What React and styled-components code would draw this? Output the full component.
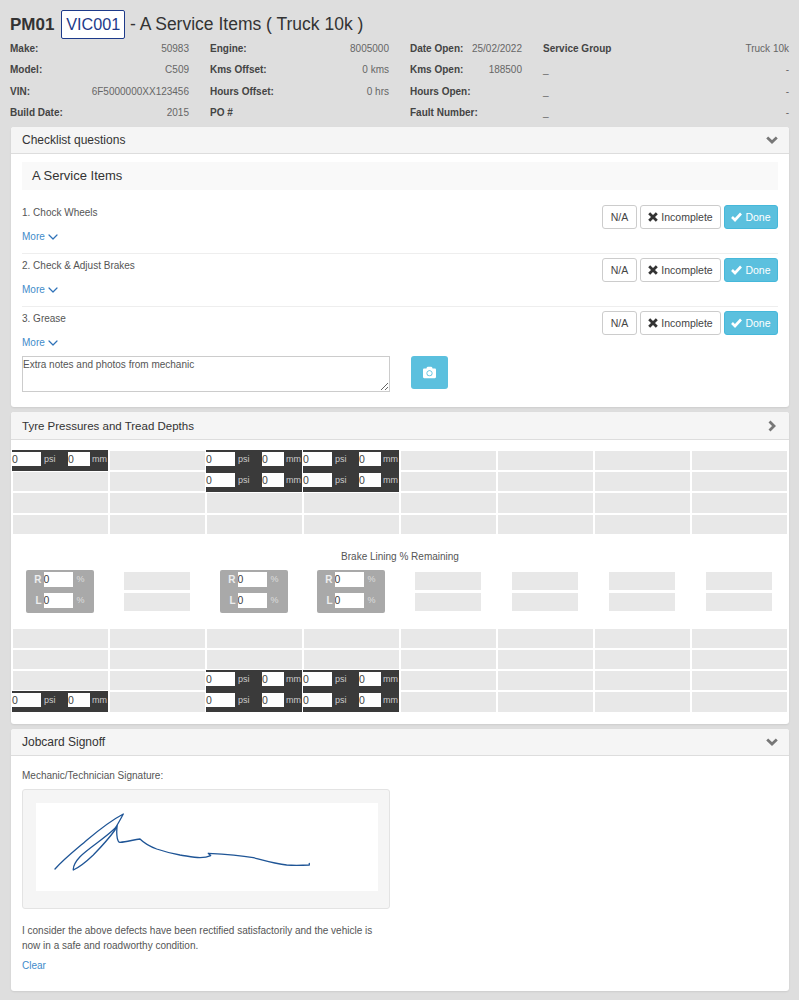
import React from 'react';
import styled, { createGlobalStyle } from 'styled-components';
import { FaCamera } from 'react-icons/fa';
import { ChevronDown } from 'lucide-react';

const GlobalStyle = createGlobalStyle`
    html, body {
        margin: 0;
        padding: 0;
        background: #dedede;
        font-family: "Liberation Sans", Arial, sans-serif;
        font-size: 10px;
        color: #555;
    }
    * { box-sizing: border-box; }
`;

const Page = styled.div`
    width: 799px;
    height: 1000px;
    overflow: hidden;
    padding: 11px 10px 0 10px;
`;

const Title = styled.h3`
    display: flex;
    align-items: center;
    height: 27px;
    margin: 0;
    font-size: 17.5px;
    font-weight: 400;
    color: #333;
    white-space: pre;
    b { font-size: 17px; }
`;

const JobNumber = styled.span`
    display: inline-flex;
    align-items: center;
    justify-content: center;
    flex: none;
    width: 63.5px;
    height: 29px;
    margin: 0 5px 0 7px;
    background: #fff;
    border: 1.5px solid #1d3a8a;
    border-radius: 2px;
    font-size: 16.2px;
    color: #1d3a8a;
`;

const InfoGrid = styled.div`
    display: grid;
    grid-template-columns: 179px 179px 112px 246px;
    column-gap: 21px;
    grid-auto-rows: 21.3px;
    height: 89px;
`;

const InfoPair = styled.div`
    display: flex;
    justify-content: space-between;
    align-items: center;
    color: #666;
    white-space: nowrap;
`;

const InfoLabel = styled.b`
    color: #444;
`;

const Panel = styled.section`
    width: 778px;
    margin: 0 0 5px 1px;
    background: #fff;
    border-radius: 3px;
    box-shadow: 0 1px 2px rgba(0, 0, 0, 0.08);
    overflow: hidden;
`;

const PanelHeading = styled.div`
    display: flex;
    justify-content: space-between;
    align-items: center;
    height: ${props => props.$height || 27}px;
    padding: 0 11px;
    background: #f5f5f5;
    border-bottom: 1px solid #ddd;
    font-size: ${props => props.$size || 12}px;
    color: #333;
`;

const ChecklistBody = styled.div`
    padding: 8px 11px 15px;
`;

const SectionTitle = styled.div`
    display: flex;
    align-items: center;
    height: 28px;
    margin-bottom: 11px;
    padding: 0 0 1px 10px;
    background: #f9f9f9;
    font-size: 13px;
    color: #333;
`;

const Item = styled.div`
    display: flex;
    justify-content: space-between;
    height: ${props => props.$last ? 49 : 53}px;
    padding-top: 4px;
    border-bottom: ${props => props.$last ? '0' : '1px solid #eee'};
`;

const ItemText = styled.div`
    padding-top: 1px;
    line-height: 13px;
`;

const MoreLink = styled.a`
    display: flex;
    align-items: center;
    height: 13px;
    margin-top: 11px;
    color: #428bca;
    svg {
        flex: none;
        width: 16px;
        height: 16px;
        color: #2f72b8;
    }
`;

const ButtonGroup = styled.div`
    display: flex;
    gap: 3px;
`;

const ActionButton = styled.button`
    display: flex;
    align-items: center;
    justify-content: center;
    gap: 3px;
    width: ${props => props.$width}px;
    height: 24px;
    padding: 0;
    background: ${props => props.$active ? '#5bc0de' : '#fff'};
    border: 1px solid ${props => props.$active ? '#46b8da' : '#ccc'};
    border-radius: 3px;
    font-family: inherit;
    font-size: 10.5px;
    color: ${props => props.$active ? '#fff' : '#444'};
`;

const NotesRow = styled.div`
    display: flex;
    align-items: flex-start;
    gap: 21px;
`;

const Notes = styled.textarea`
    display: block;
    width: 368px;
    height: 36px;
    padding: 1px 0;
    border: 1px solid #ccc;
    border-radius: 0;
    font-family: inherit;
    font-size: 10px;
    line-height: 13px;
    color: #555;
    &::placeholder {
        color: #555;
        opacity: 1;
    }
`;

const CameraButton = styled.button`
    display: flex;
    align-items: center;
    justify-content: center;
    width: 37px;
    height: 33px;
    padding: 0;
    background: #5bc0de;
    border: 0;
    border-radius: 3px;
    color: #fff;
    svg {
        width: 13px;
        height: 13px;
    }
`;

const TyreBody = styled.div`
    padding: 10px 1px 11.4px;
`;

const TyreGrid = styled.div`
    display: grid;
    grid-template-columns: repeat(8, 97px);
    grid-auto-rows: 21.2px;
`;

const BlankCell = styled.div`
    margin: 1px;
    background: #e8e8e8;
`;

const TyreCell = styled.div`
    display: flex;
    align-items: flex-start;
    height: 20.5px;
    margin-right: 1px;
    padding-top: 1.5px;
    background: #3a3a3a;
    color: #ccc;
    font-size: 9px;
`;

const TyreInput = styled.input`
    width: ${props => props.$width}px;
    height: 14.5px;
    flex: none;
    padding: 0;
    border: 0;
    border-radius: 0;
    background: #fff;
    font-family: inherit;
    font-size: 10.5px;
    color: #444;
`;

const Unit = styled.span`
    flex: none;
    width: ${props => props.$width}px;
    padding-left: ${props => props.$pad}px;
    line-height: 15px;
`;

const BrakeTitle = styled.div`
    margin: 15px 0 7px;
    line-height: 13px;
    text-align: center;
    color: #555;
`;

const BrakeGrid = styled.div`
    display: grid;
    grid-template-columns: repeat(8, 97px);
    height: 58px;
    margin-left: -1px;
`;

const BrakeCell = styled.div`
    justify-self: center;
    display: flex;
    flex-direction: column;
    gap: 6px;
    width: 68px;
    height: 43px;
    padding-top: 2px;
    background: #a9a9a9;
    border-radius: 2px;
`;

const BrakeRow = styled.div`
    display: flex;
    align-items: center;
    height: 15px;
    color: #ddd;
    font-size: 9px;
`;

const BrakeSide = styled.b`
    width: 18px;
    padding-right: 2px;
    text-align: right;
    font-size: 10px;
    color: #eee;
`;

const BrakeInput = styled.input`
    width: 29px;
    height: 15px;
    padding: 0;
    border: 0;
    border-radius: 0;
    background: #fff;
    font-family: inherit;
    font-size: 10.5px;
    color: #444;
`;

const BrakePercent = styled.span`
    padding-left: 4px;
`;

const BrakeBlank = styled.div`
    justify-self: center;
    display: grid;
    grid-auto-rows: 18px;
    row-gap: 3px;
    width: 66px;
    padding-top: 2px;
    div { background: #e8e8e8; }
`;

const SignoffBody = styled.div`
    padding: 13px 11px 0;
    height: 235px;
`;

const SignLabel = styled.div`
    line-height: 13px;
    margin-bottom: 7px;
`;

const SignWell = styled.div`
    width: 368px;
    height: 120px;
    padding: 13px;
    background: #f5f5f5;
    border: 1px solid #e3e3e3;
    border-radius: 3px;
`;

const SignPad = styled.div`
    width: 342px;
    height: 88px;
    background: #fff;
    svg { display: block; }
`;

const Declaration = styled.p`
    width: 368px;
    margin: 14px 0 7px;
    line-height: 15px;
`;

const ClearLink = styled.a`
    color: #428bca;
`;

const items = ['1. Chock Wheels', '2. Check & Adjust Brakes', '3. Grease'];

const info = [
    ['Make:', '50983'], ['Engine:', '8005000'], ['Date Open:', '25/02/2022'], ['Service Group', 'Truck 10k'],
    ['Model:', 'C509'], ['Kms Offset:', '0 kms'], ['Kms Open:', '188500'], ['_', '-'],
    ['VIN:', '6F5000000XX123456'], ['Hours Offset:', '0 hrs'], ['Hours Open:', ''], ['_', '-'],
    ['Build Date:', '2015'], ['PO #', ''], ['Fault Number:', ''], ['_', '-'],
];

// which columns hold a tyre in each row
const topRows = [[0, 2, 3], [2, 3], [], []];
const bottomRows = [[], [], [2, 3], [0, 2, 3]];
const brakeColumns = [0, 2, 3];
const columns = [0, 1, 2, 3, 4, 5, 6, 7];

const HeavyChevron = ({ right }) => (
    <svg width="12" height="12" viewBox="0 0 12 12" fill="none" stroke="#777" strokeWidth="2.8">
        <path d={right ? 'M3.5 1.5L8 6L3.5 10.5' : 'M1.2 3.5L6 8L10.8 3.5'} />
    </svg>
);

const CrossIcon = () => (
    <svg width="10" height="10" viewBox="0 0 10 10" fill="none" stroke="#333" strokeWidth="2.8">
        <path d="M1.2 1.2L8.8 8.8M8.8 1.2L1.2 8.8" />
    </svg>
);

const CheckIcon = () => (
    <svg width="11" height="10" viewBox="0 0 11 10" fill="none" stroke="#fff" strokeWidth="2.6">
        <path d="M1 5L4 8L10 1.5" />
    </svg>
);

const Tyre = () => (
    <TyreCell>
        <TyreInput $width={29} defaultValue="0" />
        <Unit $width={27} $pad={3}>psi</Unit>
        <TyreInput $width={22} defaultValue="0" />
        <Unit $width={18} $pad={2}>mm</Unit>
    </TyreCell>
);

const TyreRows = ({ rows }) => (
    <TyreGrid>
        {rows.map((row, r) => columns.map(c => (
            row.includes(c) ? <Tyre key={`${r}-${c}`} /> : <BlankCell key={`${r}-${c}`} />
        )))}
    </TyreGrid>
);

const Signature = () => (
    <svg width="342" height="88" viewBox="0 0 342 88" fill="none" stroke="#1f5596" strokeWidth="1.3" strokeLinejoin="round" strokeLinecap="round">
        <path d="M19 66C30 54 42 45 51 37C64 26 76 17 87.3 11C84 17 82 21 79 25.3C68 36 54 44 44 53.7C40 58 37 63 37.3 67C44 64 51 58 57.3 52C66 43 74 34 79 27L81.3 22C80.5 27 80.5 31 81.3 35.3C82 38 83 39.5 84 39.3C91 39 98 36.5 104 36C109 41 114 43.5 120.7 46C128 48.5 136 50.5 144 52C151 53 158 54.5 164 54.7C168 54.7 172 54 174.7 52.7L172.3 50.3C186 51 202 52 217.3 54.7C228 57.5 240 61 250.7 62C258 62.5 266 62.3 273.3 62L273.3 60.3" />
    </svg>
);

const App = () => (
    <Page>
        <GlobalStyle />
        <Title><b>PM01</b><JobNumber>VIC001</JobNumber>- A Service Items ( Truck 10k )</Title>
        <InfoGrid>
            {info.map(([label, value], i) => (
                <InfoPair key={i}>
                    {label === '_' ? <span>_</span> : <InfoLabel>{label}</InfoLabel>}
                    <span>{value}</span>
                </InfoPair>
            ))}
        </InfoGrid>

        <Panel>
            <PanelHeading>Checklist questions<HeavyChevron /></PanelHeading>
            <ChecklistBody>
                <SectionTitle>A Service Items</SectionTitle>
                {items.map((item, i) => (
                    <Item key={item} $last={i === items.length - 1}>
                        <div>
                            <ItemText>{item}</ItemText>
                            <MoreLink>More<ChevronDown strokeWidth={1.8} /></MoreLink>
                        </div>
                        <ButtonGroup>
                            <ActionButton $width={35}>N/A</ActionButton>
                            <ActionButton $width={81}><CrossIcon />Incomplete</ActionButton>
                            <ActionButton $width={54} $active><CheckIcon />Done</ActionButton>
                        </ButtonGroup>
                    </Item>
                ))}
                <NotesRow>
                    <Notes placeholder="Extra notes and photos from mechanic" />
                    <CameraButton><FaCamera /></CameraButton>
                </NotesRow>
            </ChecklistBody>
        </Panel>

        <Panel>
            <PanelHeading $height={28} $size={11.5}>Tyre Pressures and Tread Depths<HeavyChevron right /></PanelHeading>
            <TyreBody>
                <TyreRows rows={topRows} />
                <BrakeTitle>Brake Lining % Remaining</BrakeTitle>
                <BrakeGrid>
                    {columns.map(c => (
                        brakeColumns.includes(c) ? (
                            <BrakeCell key={c}>
                                <BrakeRow><BrakeSide>R</BrakeSide><BrakeInput defaultValue="0" /><BrakePercent>%</BrakePercent></BrakeRow>
                                <BrakeRow><BrakeSide>L</BrakeSide><BrakeInput defaultValue="0" /><BrakePercent>%</BrakePercent></BrakeRow>
                            </BrakeCell>
                        ) : (
                            <BrakeBlank key={c}><div /><div /></BrakeBlank>
                        )
                    ))}
                </BrakeGrid>
                <TyreRows rows={bottomRows} />
            </TyreBody>
        </Panel>

        <Panel>
            <PanelHeading>Jobcard Signoff<HeavyChevron /></PanelHeading>
            <SignoffBody>
                <SignLabel>Mechanic/Technician Signature:</SignLabel>
                <SignWell>
                    <SignPad><Signature /></SignPad>
                </SignWell>
                <Declaration>I consider the above defects have been rectified satisfactorily and the vehicle is now in a safe and roadworthy condition.</Declaration>
                <ClearLink>Clear</ClearLink>
            </SignoffBody>
        </Panel>
    </Page>
);

export default App;
